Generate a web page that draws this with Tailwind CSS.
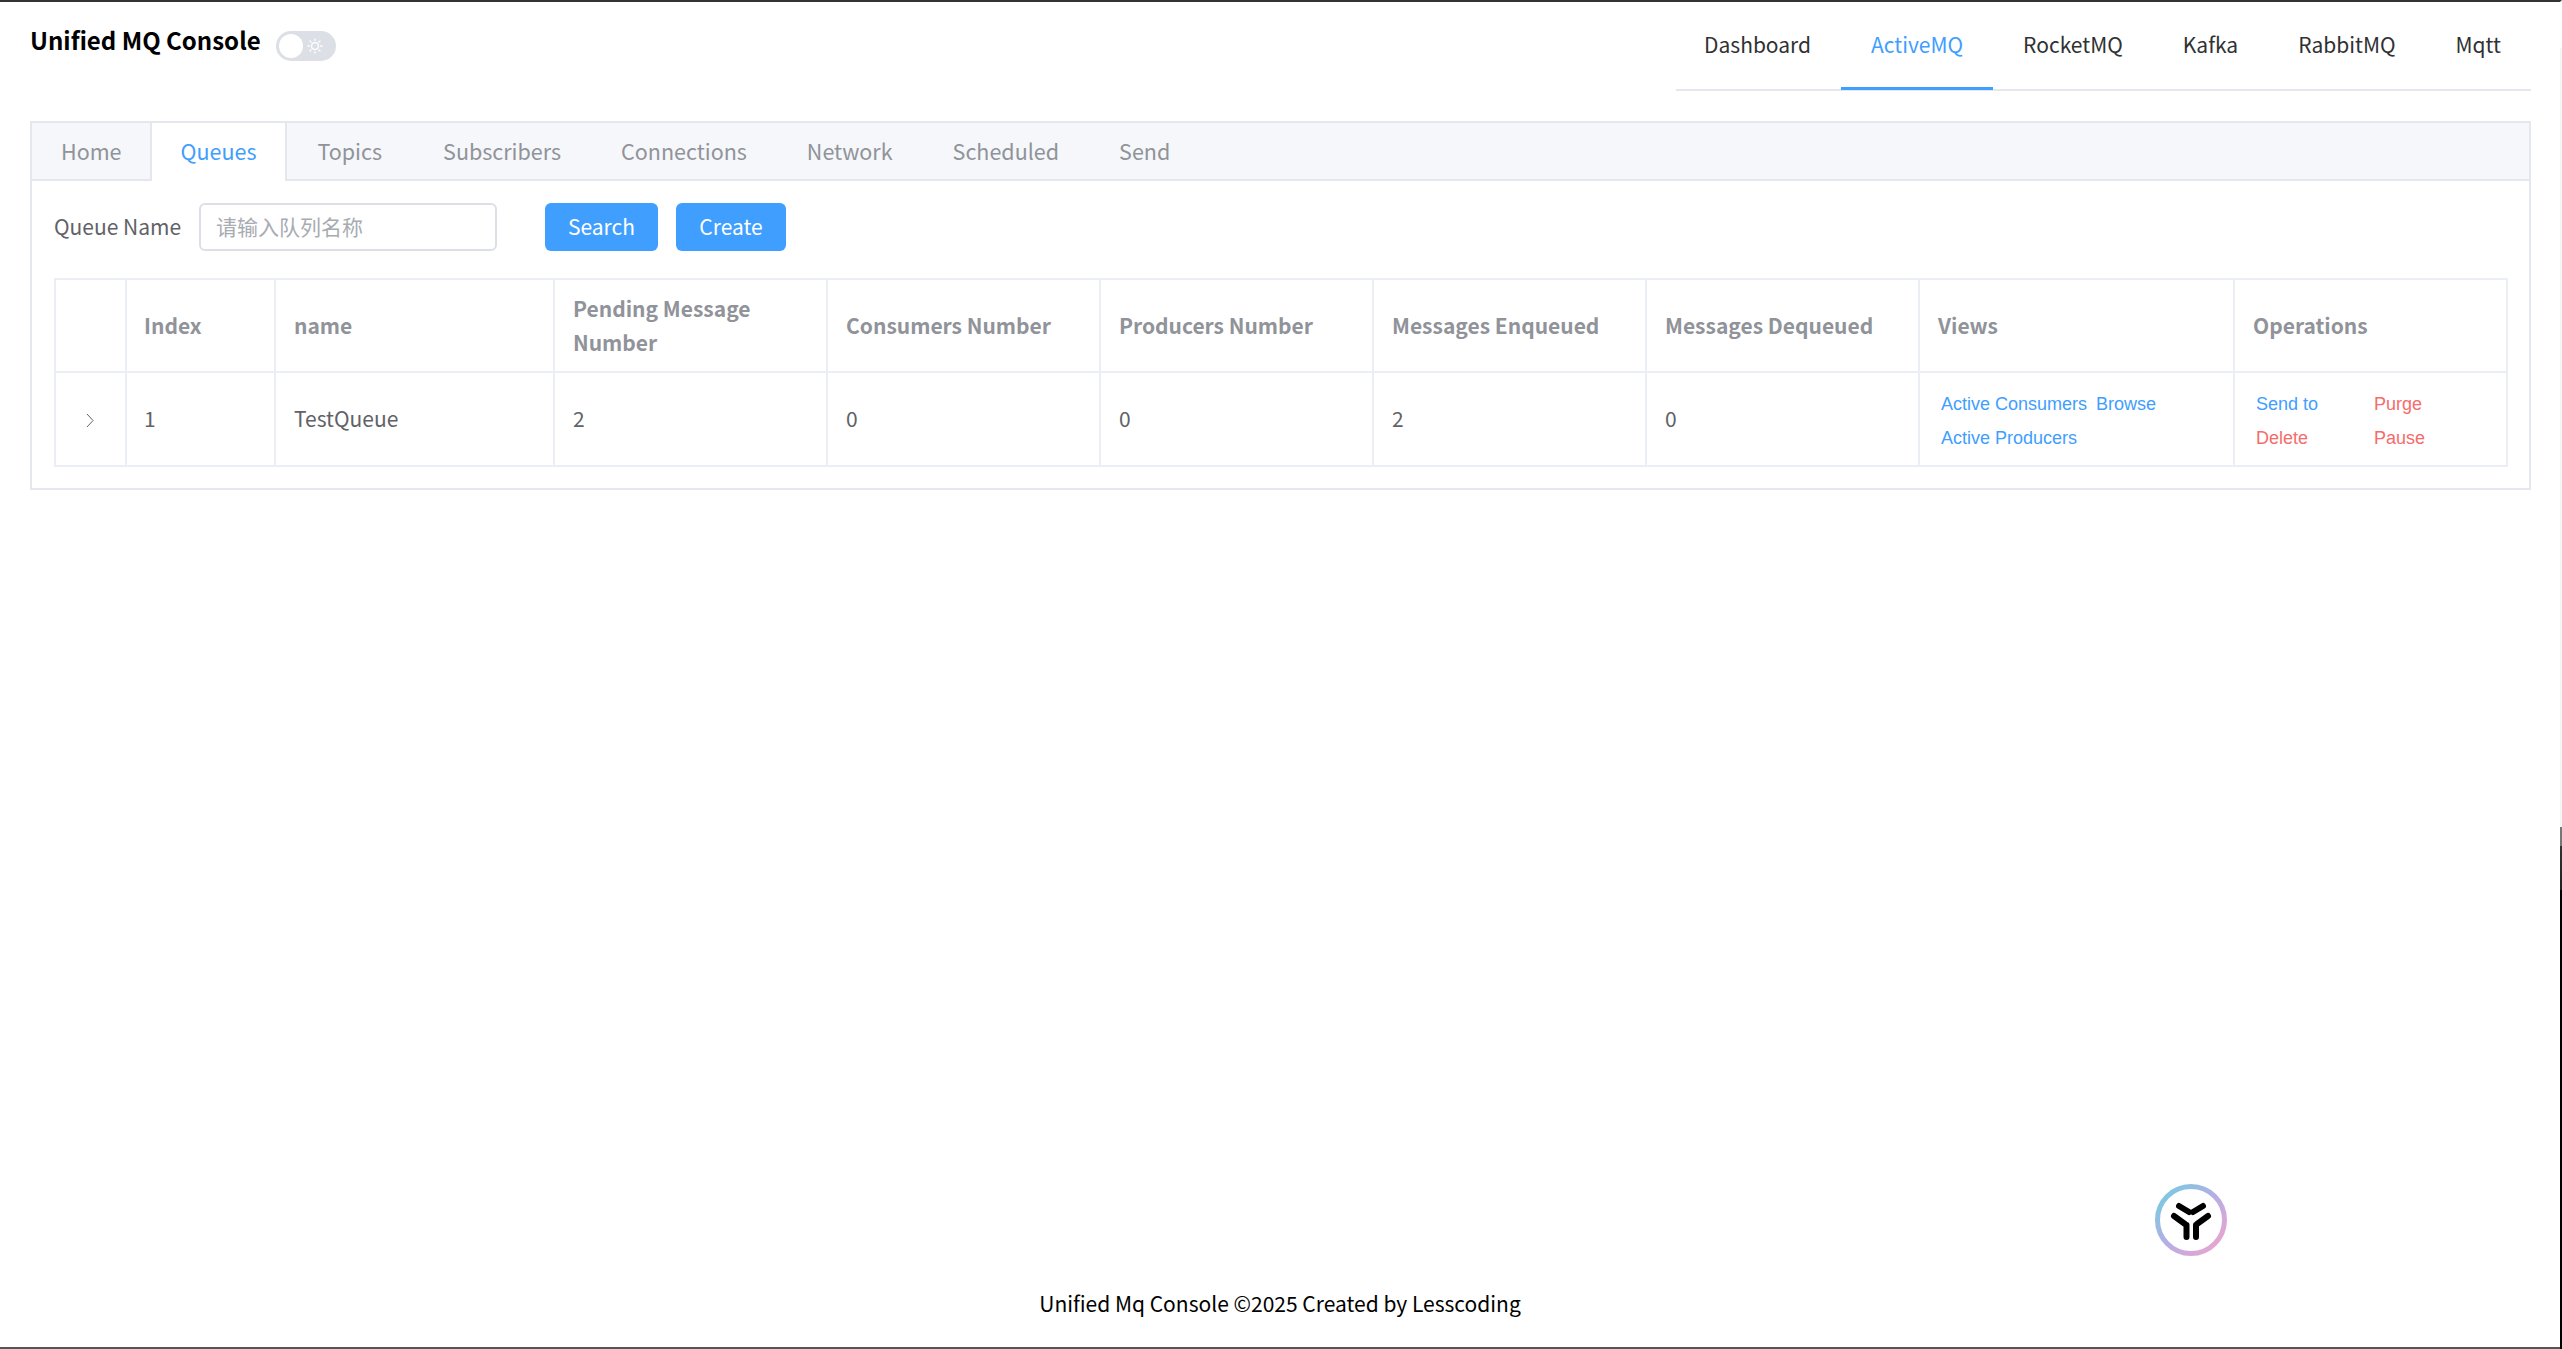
<!DOCTYPE html>
<html lang="en">
  <head>
    <meta charset="UTF-8" />
    <meta name="viewport" content="width=device-width, initial-scale=1.0" />
    <script src="https://cdn.jsdelivr.net/npm/@tailwindcss/browser@4"></script>
    <title>Unified MQ Console</title>
  </head>
  <body class="bg-white font-['Noto_Sans_CJK_SC','Noto_Sans',sans-serif] text-[21px] text-[#303133]">
    <div class="relative h-[1349px] overflow-hidden flex flex-col border-t-2 border-b-2 border-t-[#333] border-b-[#555] border-r-2 border-r-transparent">
      <!-- header -->
      <header class="flex justify-between items-start pl-[30px] pr-[29px] h-[89px]">
        <div class="flex items-start gap-[15px] pt-[20px]">
          <span class="text-[24px] font-bold text-black leading-[36px]">Unified MQ Console</span>
          <span class="relative block w-[60px] h-[30px] rounded-full bg-[#dcdfe6] mt-[9px]">
            <span class="absolute left-[3px] top-[3px] w-[24px] h-[24px] rounded-full bg-white"></span>
            <svg class="absolute left-[31px] top-[7px]" width="16" height="16" viewBox="0 0 16 16" fill="none" stroke="#fff" stroke-width="1.3" stroke-linecap="round">
              <circle cx="8" cy="8" r="3.4" />
              <path d="M8 1v1.5M8 13.5V15M1 8h1.5M13.5 8H15M3 3l1 1M12 12l1 1M3 13l1-1M12 4l1-1" />
            </svg>
          </span>
        </div>
        <nav class="flex h-[89px] border-b-2 border-[#e4e7ed]">
          <a class="block pl-[28px] pr-[30px] h-[87px] leading-[85px] text-[#303133]">Dashboard</a>
          <a class="block px-[30px] h-[88px] shrink-0 leading-[85px] text-[#409eff] border-b-[3px] border-[#409eff]">ActiveMQ</a>
          <a class="block px-[30px] h-[87px] leading-[85px] text-[#303133]">RocketMQ</a>
          <a class="block px-[30px] h-[87px] leading-[85px] text-[#303133]">Kafka</a>
          <a class="block px-[30px] h-[87px] leading-[85px] text-[#303133]">RabbitMQ</a>
          <a class="block px-[30px] h-[87px] leading-[85px] text-[#303133]">Mqtt</a>
        </nav>
      </header>

      <!-- main card -->
      <main class="mx-[30px] mt-[30px] border-2 border-[#e4e7ed] h-[369px] w-[2501px]">
        <div class="flex h-[58px] bg-[#f5f7fa] border-b-2 border-[#e4e7ed] text-[21.5px]">
          <a class="block pl-[29px] pr-[28px] leading-[56px] text-[#909399]">Home</a>
          <a class="block px-[29px] h-[58px] leading-[56px] bg-white text-[#409eff] border-x-2 border-[#e4e7ed]">Queues</a>
          <a class="block pl-[30px] pr-[31px] leading-[56px] text-[#909399]">Topics</a>
          <a class="block px-[30px] leading-[56px] text-[#909399]">Subscribers</a>
          <a class="block px-[30px] leading-[56px] text-[#909399]">Connections</a>
          <a class="block px-[30px] leading-[56px] text-[#909399]">Network</a>
          <a class="block px-[30px] leading-[56px] text-[#909399]">Scheduled</a>
          <a class="block px-[30px] leading-[56px] text-[#909399]">Send</a>
        </div>
        <div class="px-[22px] pt-[22px]">
          <form class="flex items-center h-[48px]">
            <label class="w-[145px] text-[#606266]">Queue Name</label>
            <input class="w-[298px] h-[48px] rounded-[6px] border-2 border-[#dcdfe6] px-[15px] pb-[2px] text-[21px] placeholder:text-[#a8abb2]" placeholder="请输入队列名称" />
            <button type="button" class="ml-[48px] w-[113px] h-[48px] rounded-[6px] bg-[#409eff] text-white text-[21px]">Search</button>
            <button type="button" class="ml-[18px] w-[110px] h-[48px] rounded-[6px] bg-[#409eff] text-white text-[21px]">Create</button>
          </form>
          <table class="mt-[27px] table-fixed border-collapse w-[2452px] border-2 border-[#ebeef5]">
            <colgroup>
              <col class="w-[71px]" />
              <col class="w-[149px]" />
              <col class="w-[279px]" />
              <col class="w-[273px]" />
              <col class="w-[273px]" />
              <col class="w-[273px]" />
              <col class="w-[273px]" />
              <col class="w-[273px]" />
              <col class="w-[315px]" />
              <col class="w-[273px]" />
            </colgroup>
            <thead>
              <tr class="h-[93px] text-left text-[#909399] font-bold leading-[34px]">
                <th class="border-r-2 border-b-2 border-[#ebeef5]"></th>
                <th class="px-[17px] pb-[2px] border-r-2 border-b-2 border-[#ebeef5]">Index</th>
                <th class="px-[18px] pb-[2px] border-r-2 border-b-2 border-[#ebeef5]">name</th>
                <th class="px-[18px] pb-[2px] border-r-2 border-b-2 border-[#ebeef5]">Pending Message Number</th>
                <th class="px-[18px] pb-[2px] border-r-2 border-b-2 border-[#ebeef5]">Consumers Number</th>
                <th class="px-[18px] pb-[2px] border-r-2 border-b-2 border-[#ebeef5]">Producers Number</th>
                <th class="px-[18px] pb-[2px] border-r-2 border-b-2 border-[#ebeef5]">Messages Enqueued</th>
                <th class="px-[18px] pb-[2px] border-r-2 border-b-2 border-[#ebeef5]">Messages Dequeued</th>
                <th class="px-[18px] pb-[2px] border-r-2 border-b-2 border-[#ebeef5]">Views</th>
                <th class="px-[18px] pb-[2px] border-b-2 border-[#ebeef5]">Operations</th>
              </tr>
            </thead>
            <tbody>
              <tr class="h-[94px] text-[#606266] border-b-2 border-[#ebeef5]">
                <td class="border-r-2 border-[#ebeef5] pr-[2px] pb-[2px] text-center">
                  <svg class="inline-block" width="8" height="15" viewBox="0 0 8 15" fill="none" stroke="#606266" stroke-width="1">
                    <path d="M1 1l6 6.5-6 6.5" />
                  </svg>
                </td>
                <td class="px-[17px] border-r-2 border-[#ebeef5]">1</td>
                <td class="px-[18px] border-r-2 border-[#ebeef5]">TestQueue</td>
                <td class="px-[18px] border-r-2 border-[#ebeef5]">2</td>
                <td class="px-[18px] border-r-2 border-[#ebeef5]">0</td>
                <td class="px-[18px] border-r-2 border-[#ebeef5]">0</td>
                <td class="px-[18px] border-r-2 border-[#ebeef5]">2</td>
                <td class="px-[18px] border-r-2 border-[#ebeef5]">0</td>
                <td class="px-[21px] pt-[3px] border-r-2 border-[#ebeef5] font-['Liberation_Sans',sans-serif] text-[18px] leading-[34px] text-[#409eff]">
                  <div class="flex gap-[9px]"><a>Active Consumers</a><a>Browse</a></div>
                  <div><a>Active Producers</a></div>
                </td>
                <td class="px-[21px] pt-[3px] font-['Liberation_Sans',sans-serif] text-[18px] leading-[34px]">
                  <div class="grid grid-cols-[118px_1fr]">
                    <a class="text-[#409eff]">Send to</a>
                    <a class="text-[#f56c6c]">Purge</a>
                    <a class="text-[#f56c6c]">Delete</a>
                    <a class="text-[#f56c6c]">Pause</a>
                  </div>
                </td>
              </tr>
            </tbody>
          </table>
        </div>
      </main>

      <!-- floating logo -->
      <div class="absolute left-[2155px] top-[1182px] w-[72px] h-[72px]">
        <svg width="72" height="72" viewBox="0 0 72 72" fill="none">
          <defs>
            <linearGradient id="ring" x1="0" y1="0" x2="1" y2="1">
              <stop offset="0" stop-color="#6fcfe0" />
              <stop offset="0.5" stop-color="#b5aee4" />
              <stop offset="1" stop-color="#f4a3cc" />
            </linearGradient>
          </defs>
          <circle cx="36" cy="36" r="33.5" stroke="url(#ring)" stroke-width="5" />
          <g stroke="#000" stroke-width="6" stroke-linecap="round">
            <path d="M24 22l10 6M48 22l-10 6M19 32l11 8M53 32l-11 8M31.5 41v12M41 41v12" />
          </g>
        </svg>
      </div>

      <footer class="mt-auto h-[60px] text-center leading-[32px] text-black">Unified Mq Console ©2025 Created by Lesscoding</footer>
    </div>
    <!-- edge of the window behind -->
    <div class="fixed right-0 top-[48px] h-[779px] w-[2px] bg-[#f5f5f5]"></div>
    <div class="fixed right-0 top-[827px] bottom-0 w-[2px] bg-[linear-gradient(#777_0,#777_19px,#333_19px,#222_63px,#000_63px)]"></div>
  </body>
</html>
